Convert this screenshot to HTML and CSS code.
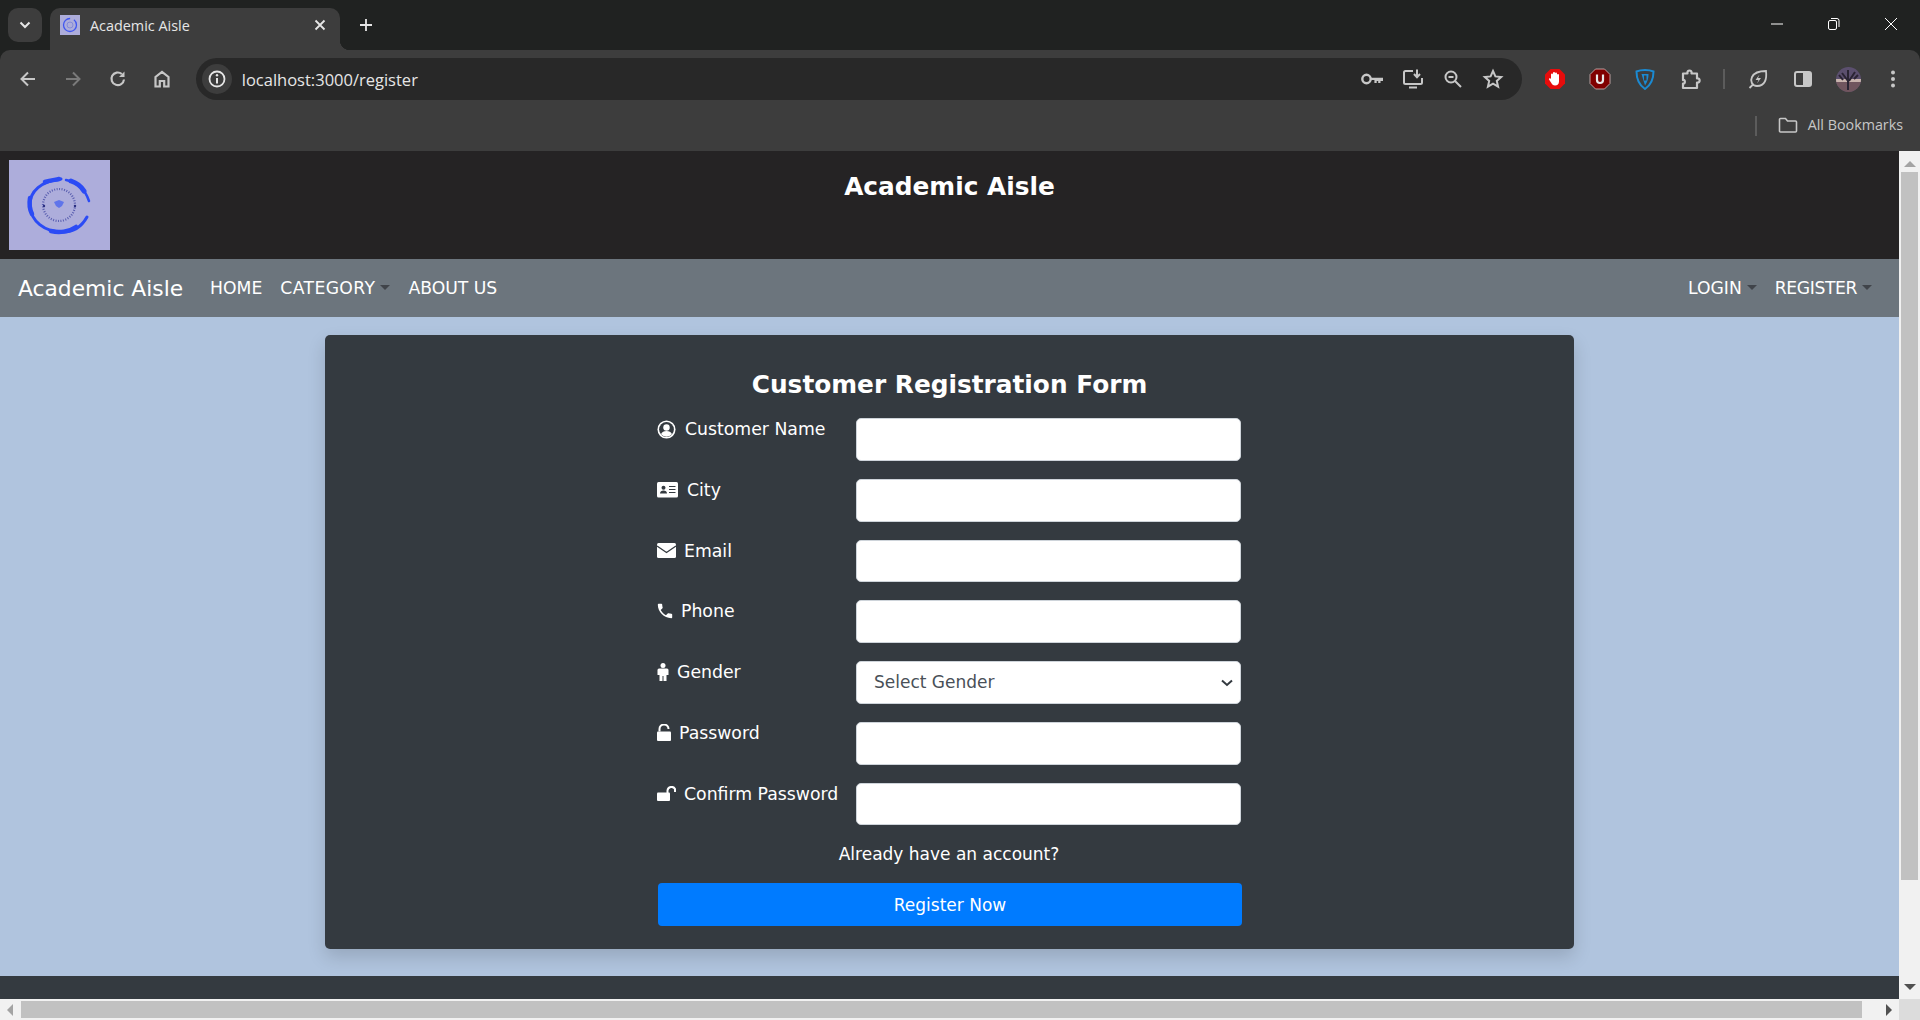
FILE: index.html
```html
<!DOCTYPE html>
<html lang="en">
<head>
    <meta charset="UTF-8">
    <title>Academic Aisle</title>
    <link rel="stylesheet" href="styles.css">
</head>
<body>

    <div class="tabstrip">
        <div class="tab-search">
            <svg width="14" height="14" viewBox="0 0 14 14"><path d="M2.500 4.500 7 9l4.500-4.500" fill="none" stroke="#e6e6e6" stroke-width="2"/></svg>
        </div>
        <div class="tab">
            <svg class="favicon" width="20" height="20" viewBox="0 0 20 20">
                <rect width="20" height="20" fill="#adaddb"/>
                <circle cx="10" cy="10" r="6.500" fill="none" stroke="#3f55f0" stroke-width="1.300" stroke-dasharray="30 4 7 0"/>
                <circle cx="10" cy="10" r="3" fill="none" stroke="#7b80d8" stroke-width=".8"/>
            </svg>
            <span class="tab-title">Academic Aisle</span>
            <svg width="12" height="12" viewBox="0 0 12 12"><path d="M1.500 1.500l9 9m0-9l-9 9" stroke="#e6e6e6" stroke-width="1.800"/></svg>
        </div>
        <div class="new-tab">
            <svg width="14" height="14" viewBox="0 0 14 14"><path d="M7 1v12M1 7h12" stroke="#e6e6e6" stroke-width="1.800"/></svg>
        </div>
        <div class="window-controls">
            <svg width="14" height="14" viewBox="0 0 14 14"><path d="M1 7h12" stroke="#fff" stroke-width="1"/></svg>
            <svg width="14" height="14" viewBox="0 0 14 14"><rect x="1.500" y="3.500" width="8" height="9" rx="1.500" fill="none" stroke="#fff"/><path d="M4 1.500h6a2 2 0 0 1 2 2V10" fill="none" stroke="#fff"/></svg>
            <svg width="14" height="14" viewBox="0 0 14 14"><path d="M1 1l12 12M13 1L1 13" stroke="#fff" stroke-width="1"/></svg>
        </div>
    </div>

    <div class="toolbar">
        <div class="tool"><svg width="20" height="20" viewBox="0 0 20 20"><path d="M17 10H4M10 3.500 3.500 10l6.500 6.500" fill="none" stroke="#c7c7c7" stroke-width="2"/></svg></div>
        <div class="tool"><svg width="20" height="20" viewBox="0 0 20 20"><path d="M3 10h13M10 3.500l6.500 6.500-6.500 6.500" fill="none" stroke="#7a7a7a" stroke-width="2"/></svg></div>
        <div class="tool"><svg width="20" height="20" viewBox="0 0 20 20"><path d="M16 10.500A6.300 6.300 0 1 1 13.800 5" fill="none" stroke="#c7c7c7" stroke-width="2.200"/><path d="M16.500 2.500v5.500H11z" fill="#c7c7c7"/></svg></div>
        <div class="tool"><svg width="20" height="20" viewBox="0 0 20 20"><path d="M3.500 17.500V8L10 3l6.500 5v9.500h-4.300V12H7.800v5.500z" fill="none" stroke="#c7c7c7" stroke-width="2.200"/></svg></div>
        <div class="omnibox">
            <div class="site-info"><svg width="20" height="20" viewBox="0 0 20 20"><circle cx="10" cy="10" r="7.500" fill="none" stroke="#e6e6e6" stroke-width="1.800"/><path d="M10 9v5.500" stroke="#e6e6e6" stroke-width="2"/><circle cx="10" cy="6.300" r="1.200" fill="#e6e6e6"/></svg></div>
            <span class="url">localhost:3000/register</span>
            <div class="omni-tool"><svg width="24" height="20" viewBox="0 0 24 20"><circle cx="6.500" cy="10" r="4.200" fill="none" stroke="#c7c7c7" stroke-width="2.400"/><path d="M10.500 8.800h12.500v3.200h-2.500v2h-2.300v-2h-1.500v2h-2.300v-3h-3.900z" fill="#c7c7c7"/></svg></div>
            <div class="omni-tool"><svg width="22" height="22" viewBox="0 0 22 22"><path d="M11 3H3.500A1.500 1.500 0 0 0 2 4.500v10A1.500 1.500 0 0 0 3.500 16h15a1.500 1.500 0 0 0 1.500-1.500V10M7 19.500h8" fill="none" stroke="#c7c7c7" stroke-width="2"/><path d="M15 1.500V9m-3-3l3 3.300L18 6" fill="none" stroke="#c7c7c7" stroke-width="2"/></svg></div>
            <div class="omni-tool"><svg width="20" height="20" viewBox="0 0 20 20"><circle cx="8" cy="8" r="5.500" fill="none" stroke="#c7c7c7" stroke-width="2"/><path d="M12 12l6 6M5.500 8h5" stroke="#c7c7c7" stroke-width="2"/></svg></div>
            <div class="omni-tool"><svg width="22" height="22" viewBox="0 0 22 22"><path d="M11 3l2.400 5.400 5.800.6-4.400 3.900 1.300 5.800L11 15.700l-5.100 3 1.300-5.800L2.800 9l5.800-.6z" fill="none" stroke="#c7c7c7" stroke-width="2"/></svg></div>
        </div>
        <div class="extensions">
            <div class="tool"><svg width="22" height="22" viewBox="0 0 22 22"><path d="M6.500 1h9L21 6.500v9L15.500 21h-9L1 15.500v-9z" fill="#e60c0c"/><path d="M7 11V6.500a1 1 0 0 1 2 0V5a1 1 0 0 1 2 0v.500a1 1 0 0 1 2 0V7a1 1 0 0 1 2 0v6.500c0 2.500-1.500 4-4 4-2 0-3-1-4-3l-2-3c-.5-1 .8-1.800 1.500-1z" fill="#fff"/></svg></div>
            <div class="tool"><svg width="22" height="22" viewBox="0 0 22 22"><path d="M6.500 1h9L21 6.500v9L15.500 21h-9L1 15.500v-9z" fill="#800000" stroke="#b9a0a0"/><path d="M8 6.500V12a3 3 0 0 0 6 0V6.500" fill="none" stroke="#e8e8e8" stroke-width="2.200"/></svg></div>
            <div class="tool"><svg width="20" height="22" viewBox="0 0 20 22"><path d="M1.500 3.500C6 1.500 14 1.500 18.500 3.500 18.500 11 16 17 10 21 4 17 1.500 11 1.500 3.500z" fill="none" stroke="#1b8ad2" stroke-width="2"/><path d="M6.500 6h7c0 4-1 8-3.500 11.500z" fill="#1b8ad2"/><path d="M9 7.500h2.500v5H9z" fill="#3d3d3d"/></svg></div>
            <div class="tool"><svg width="22" height="22" viewBox="0 0 22 22"><path d="M3 5.500h4.500c-1-4 5-4 4 0H17v5c3.500-1 3.500 5 0 4V20H3v-4.500c2.500 1 2.500-4.500 0-3.500z" fill="none" stroke="#c7c7c7" stroke-width="2.200" stroke-linejoin="round"/></svg></div>
            <div class="tool-divider"></div>
            <div class="tool"><svg width="22" height="22" viewBox="0 0 22 22"><path d="M19 3c1 8-1 15-9 15-5 0-7-5-5-9 2-4 8-6 14-6zM2.500 20 6 16.500" fill="none" stroke="#c7c7c7" stroke-width="1.800"/><path d="M12.500 6.500l-4 5.500h3l-1.500 3.500 4-5.500h-3z" fill="#c7c7c7"/></svg></div>
            <div class="tool"><svg width="20" height="20" viewBox="0 0 20 20"><rect x="2" y="3" width="16" height="14" rx="2" fill="none" stroke="#c7c7c7" stroke-width="2"/><rect x="10" y="3" width="8" height="14" fill="#c7c7c7"/></svg></div>
            <div class="tool">
                <svg width="25" height="25" viewBox="0 0 25 25">
                    <defs><clipPath id="avatar"><circle cx="12.500" cy="12.500" r="12.500"/></clipPath></defs>
                    <g clip-path="url(#avatar)">
                        <rect width="25" height="25" fill="#5b4f6e"/>
                        <rect y="12" width="25" height="3" fill="#c9b4ae"/>
                        <rect y="15" width="25" height="10" fill="#70555e"/>
                        <path d="M12 3v20M6 6l6 8M19 5l-6 9M3 8l4 5M22 8l-4 4" stroke="#2a2433" stroke-width="2"/>
                    </g>
                </svg>
            </div>
            <div class="tool"><svg width="6" height="20" viewBox="0 0 6 20"><circle cx="3" cy="3.500" r="2" fill="#c7c7c7"/><circle cx="3" cy="10" r="2" fill="#c7c7c7"/><circle cx="3" cy="16.500" r="2" fill="#c7c7c7"/></svg></div>
        </div>
    </div>

    <div class="bookmarks">
        <div class="tool-divider"></div>
        <svg width="20" height="18" viewBox="0 0 20 18"><path d="M1.500 3.500a1 1 0 0 1 1-1h5l2 2.500h8a1 1 0 0 1 1 1v9a1 1 0 0 1-1 1h-15a1 1 0 0 1-1-1z" fill="none" stroke="#c7c7c7" stroke-width="1.600"/></svg>
        <span class="all-bookmarks">All Bookmarks</span>
    </div>

    <div class="viewport">
        <div class="page">
            <header class="site-header">
                <svg class="logo" width="101" height="90" viewBox="0 0 101 90">
                    <rect width="101" height="90" fill="#adaddb"/>
                    <g fill="none" stroke="#2b4bf5" stroke-linecap="round">
                        <path d="M52 19C33 21 20 31 21 46 22 61 35 72 54 72 65 72 73 66 78 57" stroke-width="3"/>
                        <path d="M36 22C42 20 46 20 50 19M21 38C20 44 21 50 23 54" stroke-width="4.500"/>
                        <path d="M57 20C68 22 76 29 80 41" stroke-width="2.500"/>
                        <path d="M62 21C68 23 72 26 75 31" stroke-width="5"/>
                        <path d="M42 71C50 73 60 72 67 67" stroke-width="4.500"/>
                    </g>
                    <circle cx="50" cy="45" r="16" fill="none" stroke="#5a5fb0" stroke-width="2.200" stroke-dasharray="1 1.500"/>
                    <circle cx="35" cy="46" r="1.200" fill="#2a2f80"/>
                    <circle cx="66" cy="46" r="1.200" fill="#2a2f80"/>
                    <path d="M45 42l5-2 5 2-2 4-3 2-3-2z" fill="#5f74ea"/>
                </svg>
                <h1 class="site-title">Academic Aisle</h1>
            </header>

            <nav class="navbar">
                <a class="brand">Academic Aisle</a>
                <a class="nav-link">Home</a>
                <a class="nav-link dropdown nav-wide">Category</a>
                <a class="nav-link">About Us</a>
                <div class="nav-right">
                    <a class="nav-link dropdown">Login</a>
                    <a class="nav-link dropdown nav-tight">Register</a>
                </div>
            </nav>

            <main class="content">
                <div class="card">
                    <h2>Customer Registration Form</h2>
                    <form class="register-form">
                        <div class="form-row">
                            <label for="name">
                                <svg class="icon-wide" width="19" height="19" viewBox="0 0 20 20"><circle cx="10" cy="10" r="9.500" fill="#fff"/><circle cx="10" cy="10" r="7.800" fill="#343a40"/><circle cx="10" cy="8" r="3.400" fill="#fff"/><path d="M4.200 15c1-2.500 3-3.300 5.800-3.300s4.800.8 5.800 3.300a7.800 7.800 0 0 1-11.600 0z" fill="#fff"/></svg>
                                Customer Name
                            </label>
                            <input type="text" id="name">
                        </div>
                        <div class="form-row">
                            <label for="city">
                                <svg class="icon-wide" width="21" height="16" viewBox="0 0 21 16"><rect width="21" height="15.500" rx="1.500" fill="#fff"/><circle cx="6.500" cy="5.800" r="2" fill="#343a40"/><path d="M3 11.500c0-2 1.500-3 3.500-3s3.500 1 3.500 3z" fill="#343a40"/><path d="M12 4.500h6.500M12 7.500h6.500M12 10.500h6.500" stroke="#343a40" stroke-width="1.200"/></svg>
                                City
                            </label>
                            <input type="text" id="city">
                        </div>
                        <div class="form-row">
                            <label for="email">
                                <svg width="19" height="15" viewBox="0 0 19 15"><rect width="19" height="15" rx="1.500" fill="#fff"/><path d="M0 3l9.500 6.500L19 3" fill="none" stroke="#343a40" stroke-width="1.300"/></svg>
                                Email
                            </label>
                            <input type="email" id="email">
                        </div>
                        <div class="form-row">
                            <label for="phone">
                                <svg width="16" height="16" viewBox="2 2 20 20"><path fill="#fff" d="M6.620 10.790c1.440 2.830 3.760 5.140 6.590 6.590l2.200-2.200c.27-.27.67-.36 1.020-.24 1.120.37 2.330.57 3.570.57.55 0 1 .45 1 1V20c0 .55-.45 1-1 1-9.390 0-17-7.610-17-17 0-.55.45-1 1-1h3.500c.55 0 1 .45 1 1 0 1.250.2 2.450.57 3.570.11.35.03.74-.25 1.020l-2.200 2.200z"/></svg>
                                Phone
                            </label>
                            <input type="tel" id="phone">
                        </div>
                        <div class="form-row">
                            <label for="gender">
                                <svg width="12" height="18" viewBox="0 0 12 18"><circle cx="6" cy="2.500" r="2.500" fill="#fff"/><path d="M2 5.500h8a1.500 1.500 0 0 1 1.500 1.500v5h-2v6H6.500v-5h-1v5h-3v-6h-2V7A1.500 1.500 0 0 1 2 5.500z" fill="#fff"/></svg>
                                Gender
                            </label>
                            <div class="select-wrap">
                                <select id="gender">
                                    <option>Select Gender</option>
                                    <option>Male</option>
                                    <option>Female</option>
                                </select>
                                <svg class="select-arrow" width="12" height="8" viewBox="0 0 12 8"><path d="M1 1.500l5 4.500 5-4.500" fill="none" stroke="#343a40" stroke-width="2"/></svg>
                            </div>
                        </div>
                        <div class="form-row">
                            <label for="password">
                                <svg width="14" height="17" viewBox="0 0 14 17"><path d="M2.500 7.500V5a4.500 4.500 0 0 1 9 0" fill="none" stroke="#fff" stroke-width="2"/><rect y="7.500" width="14" height="9.500" rx="1" fill="#fff"/></svg>
                                Password
                            </label>
                            <input type="password" id="password">
                        </div>
                        <div class="form-row">
                            <label for="confirm">
                                <svg width="19" height="15" viewBox="0 0 19 15"><path d="M10.500 7V4.500a4 4 0 0 1 7.500-1.500V6" fill="none" stroke="#fff" stroke-width="2"/><rect y="6.500" width="13" height="8.500" rx="1" fill="#fff"/></svg>
                                Confirm Password
                            </label>
                            <input type="password" id="confirm">
                        </div>
                        <p class="login-hint">Already have an account?</p>
                        <button type="submit">Register Now</button>
                    </form>
                </div>
            </main>

            <footer class="site-footer"></footer>
        </div>

        <div class="vscroll">
            <svg width="14" height="9" viewBox="0 0 14 9"><path d="M7 1l6 6H1z" fill="#a3a3a3"/></svg>
            <div class="vthumb"></div>
            <svg width="14" height="9" viewBox="0 0 14 9"><path d="M1 2h12L7 8z" fill="#505050"/></svg>
        </div>
    </div>

    <div class="hscroll">
        <svg width="9" height="14" viewBox="0 0 9 14"><path d="M7 1v12L1 7z" fill="#a3a3a3"/></svg>
        <div class="hthumb"></div>
        <svg width="9" height="14" viewBox="0 0 9 14"><path d="M2 1l6 6-6 6z" fill="#505050"/></svg>
        <div class="corner"></div>
    </div>

</body>
</html>
```

FILE: styles.css
```css
* {
    box-sizing: border-box;
}

html, body {
    height: 100%;
}

body {
    margin: 0;
    display: flex;
    flex-direction: column;
    overflow: hidden;
    font-family: "DejaVu Sans", sans-serif;
    background-color: #202221;
}

/* browser frame */
.tabstrip {
    height: 50px;
    flex: none;
    display: flex;
    padding: 8px 0 0 8px;
    background-color: #202221;
}

.tab-search {
    width: 34px;
    height: 34px;
    display: flex;
    align-items: center;
    justify-content: center;
    background-color: #3d3d3d;
    border-radius: 10px;
}

.tab {
    position: relative;
    width: 290px;
    height: 42px;
    margin-left: 8px;
    padding: 0 14px 8px 10px;
    display: flex;
    align-items: center;
    background-color: #3d3d3d;
    border-radius: 10px 10px 0 0;
}

.tab::after {
    content: "";
    position: absolute;
    right: -10px;
    bottom: 0;
    width: 10px;
    height: 10px;
    background: radial-gradient(circle at 100% 0, #202221 10px, #3d3d3d 10.5px);
}

.tab-title {
    flex: 1;
    margin-left: 10px;
    font-family: "Open Sans", sans-serif;
    font-size: 14.400px;
    color: #e6e6e6;
}

.new-tab {
    width: 34px;
    height: 34px;
    margin-left: 9px;
    display: flex;
    align-items: center;
    justify-content: center;
}

.window-controls {
    margin-left: auto;
    width: 150px;
    height: 32px;
    padding-right: 22px;
    display: flex;
    align-items: center;
    justify-content: space-between;
}

.toolbar {
    height: 50px;
    flex: none;
    display: flex;
    align-items: flex-start;
    padding: 8px 4px 0 6px;
    background-color: #3d3d3d;
    border-radius: 10px 10px 0 0;
}

.tool {
    width: 44.700px;
    height: 42px;
    flex: none;
    display: flex;
    align-items: center;
    justify-content: center;
}

.omnibox {
    flex: 1;
    height: 42px;
    margin-left: 11px;
    padding: 0 8px 0 6px;
    display: flex;
    align-items: center;
    background-color: #282828;
    border-radius: 21px;
}

.site-info {
    width: 30px;
    height: 30px;
    display: flex;
    align-items: center;
    justify-content: center;
    background-color: #3d3d3d;
    border-radius: 50%;
}

.url {
    flex: 1;
    margin-left: 10px;
    font-family: "Open Sans", sans-serif;
    font-size: 16.500px;
    color: #e6e6e6;
}

.omni-tool {
    width: 40.300px;
    display: flex;
    justify-content: center;
}

.extensions {
    display: flex;
    align-items: center;
    margin-left: 11px;
}

.extensions .tool {
    width: 45.200px;
}

.tool-divider {
    width: 2px;
    height: 20px;
    margin: 0 10px;
    background-color: #5c5c5c;
}

.bookmarks {
    height: 51px;
    flex: none;
    display: flex;
    align-items: flex-start;
    justify-content: flex-end;
    padding: 16px 17px 0 0;
    background-color: #3d3d3d;
    color: #c7c7c7;
}

.bookmarks .tool-divider {
    margin: 0 21px 0 0;
}

.all-bookmarks {
    margin-left: 10px;
    font-family: "Open Sans", sans-serif;
    font-size: 14.300px;
    line-height: 18px;
}

/* page */
.viewport {
    flex: 1;
    min-height: 0;
    display: flex;
}

.page {
    flex: 1;
    display: flex;
    flex-direction: column;
}

.site-header {
    position: relative;
    height: 108px;
    flex: none;
    padding: 9px;
    background-color: #252324;
}

.logo {
    display: block;
}

.site-title {
    position: absolute;
    top: 0;
    left: 0;
    right: 0;
    margin: 0;
    padding-top: 18px;
    text-align: center;
    font-size: 24.800px;
    line-height: 36px;
    font-weight: bold;
    color: #fff;
}

.navbar {
    height: 58px;
    flex: none;
    display: flex;
    align-items: center;
    padding: 0 27px 0 18px;
    background-color: #6c757d;
}

.brand {
    margin-right: 27px;
    font-size: 21.800px;
    color: #fff;
}

.nav-link {
    margin-right: 18px;
    font-size: 17.200px;
    text-transform: uppercase;
    color: #fff;
}

.nav-right .nav-link:last-child {
    margin-right: 0;
}

.nav-wide {
    letter-spacing: 0.4px;
}

.nav-tight {
    letter-spacing: -0.4px;
}

.dropdown::after {
    content: "";
    display: inline-block;
    margin-left: 5px;
    vertical-align: 4px;
    border-top: 5px solid #40444a;
    border-left: 5px solid transparent;
    border-right: 5px solid transparent;
}

.nav-right {
    margin-left: auto;
    display: flex;
}

.content {
    flex: 1;
    padding-top: 18px;
    background-color: #b0c4de;
}

.card {
    width: 1249px;
    height: 614px;
    margin: 0 auto;
    padding-top: 30px;
    background-color: #343a40;
    border-radius: 5px;
    box-shadow: 0 8px 18px rgba(0, 0, 0, 0.15);
    color: #fff;
}

.card h2 {
    margin: 0 0 14px;
    text-align: center;
    font-size: 24.800px;
    line-height: 39px;
}

.register-form {
    width: 584px;
    margin-left: 332px;
}

.form-row {
    height: 42.750px;
    margin-bottom: 18px;
    display: flex;
}

.form-row label {
    width: 199px;
    flex: none;
    display: flex;
    align-items: center;
    gap: 8px;
    height: 22px;
    font-size: 17.300px;
}

.icon-wide {
    margin-right: 1px;
}

.form-row input, .form-row select {
    flex: 1;
    width: 100%;
    min-width: 0;
    padding: 0 18px;
    font-family: inherit;
    font-size: 17px;
    color: #495057;
    background-color: #fff;
    border: 1px solid #ced4da;
    border-radius: 5px;
}

.form-row select {
    padding-left: 17px;
    appearance: none;
}

.select-wrap {
    position: relative;
    flex: 1;
    display: flex;
}

.select-arrow {
    position: absolute;
    right: 8px;
    top: 18px;
    pointer-events: none;
}

.login-hint {
    margin: -2px 0 0;
    text-align: center;
    font-size: 17px;
    line-height: 26px;
}

button {
    display: block;
    width: 100%;
    height: 43px;
    margin: 16px 0 0 1px;
    font-family: inherit;
    font-size: 17px;
    color: #fff;
    background-color: #007bff;
    border: none;
    border-radius: 4px;
}

.site-footer {
    height: 23px;
    flex: none;
    background-color: #343a40;
}

/* scrollbars */
.vscroll {
    width: 21px;
    flex: none;
    display: flex;
    flex-direction: column;
    align-items: center;
    padding: 9px 2px 8px;
    background-color: #f1f1f1;
}

.vthumb {
    width: 17px;
    height: 708px;
    margin: 3px 0 auto;
    background-color: #c1c1c1;
}

.hscroll {
    height: 21px;
    flex: none;
    display: flex;
    align-items: center;
    padding-left: 6px;
    background-color: #f1f1f1;
}

.hthumb {
    width: 1841px;
    height: 17px;
    margin: 0 22px 0 6px;
    background-color: #c1c1c1;
}

.corner {
    width: 21px;
    height: 21px;
    margin-left: auto;
    background-color: #dcdcdc;
}
```
